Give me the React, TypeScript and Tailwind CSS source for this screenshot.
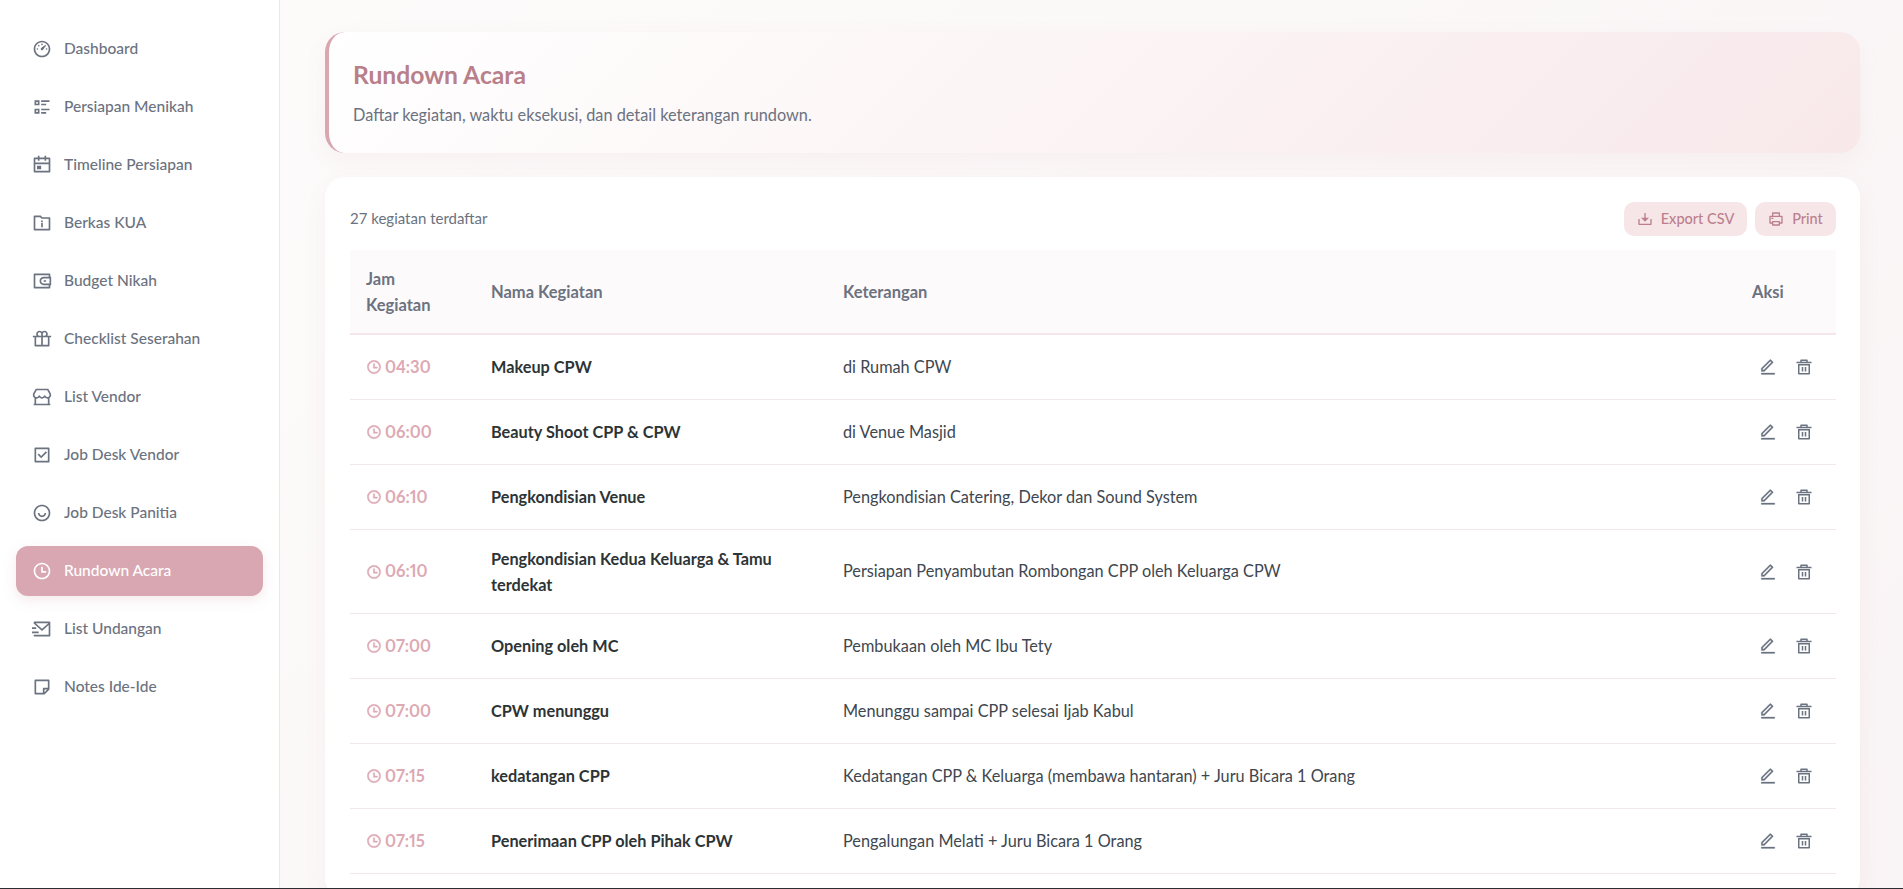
import React from "react";
import {
  RiDashboard3Line, RiListCheck2, RiCalendarEventLine, RiFolderInfoLine, RiWallet3Line, RiGiftLine,
  RiStore2Line, RiCheckboxLine, RiUserSmileLine, RiTimeLine, RiMailSendLine, RiStickyNoteLine,
  RiEditLine, RiDeleteBin5Line, RiDownload2Line, RiPrinterLine,
} from "react-icons/ri";

const nav = [
  ["Dashboard", RiDashboard3Line],
  ["Persiapan Menikah", RiListCheck2],
  ["Timeline Persiapan", RiCalendarEventLine],
  ["Berkas KUA", RiFolderInfoLine],
  ["Budget Nikah", RiWallet3Line],
  ["Checklist Seserahan", RiGiftLine],
  ["List Vendor", RiStore2Line],
  ["Job Desk Vendor", RiCheckboxLine],
  ["Job Desk Panitia", RiUserSmileLine],
  ["Rundown Acara", RiTimeLine],
  ["List Undangan", RiMailSendLine],
  ["Notes Ide-Ide", RiStickyNoteLine],
] as const;

const rows: [string, string[], string][] = [
  ["04:30", ["Makeup CPW"], "di Rumah CPW"],
  ["06:00", ["Beauty Shoot CPP & CPW"], "di Venue Masjid"],
  ["06:10", ["Pengkondisian Venue"], "Pengkondisian Catering, Dekor dan Sound System"],
  ["06:10", ["Pengkondisian Kedua Keluarga & Tamu", "terdekat"], "Persiapan Penyambutan Rombongan CPP oleh Keluarga CPW"],
  ["07:00", ["Opening oleh MC"], "Pembukaan oleh MC Ibu Tety"],
  ["07:00", ["CPW menunggu"], "Menunggu sampai CPP selesai Ijab Kabul"],
  ["07:15", ["kedatangan CPP"], "Kedatangan CPP & Keluarga (membawa hantaran) + Juru Bicara 1 Orang"],
  ["07:15", ["Penerimaan CPP oleh Pihak CPW"], "Pengalungan Melati + Juru Bicara 1 Orang"],
];

export default function App() {
  return (
    <div className="h-[889px] overflow-hidden flex flex-col font-['Lato','Inter',sans-serif] bg-[linear-gradient(135deg,#fdfbfb,#f9f4f5)]">
      <div className="flex flex-1 min-h-0">
        <aside className="w-[280px] shrink-0 bg-white border-r border-[#f0e4e7] px-4 pt-6">
          <nav className="flex flex-col gap-2">
            {nav.map(([label, Icon]) => {
              const active = label === "Rundown Acara";
              return (
                <div
                  key={label}
                  className={`h-[50px] flex items-center gap-3 rounded-xl px-4 text-[15.5px] font-medium ${active ? "bg-[#d8a7b1] text-white shadow-[0_4px_12px_rgba(216,167,177,0.25)]" : "text-[#6b7280]"}`}
                >
                  <Icon className="w-5 h-5 shrink-0" />
                  <span>{label}</span>
                </div>
              );
            })}
          </nav>
        </aside>
        <main className="flex-1 min-w-0 pl-[45px] pr-[43px] pt-8">
          <header className="h-[121px] rounded-[20px] border-l-[4px] border-[#d8a7b1] bg-[linear-gradient(135deg,#ffffff,#f8e8ea)] shadow-[0_8px_24px_rgba(183,110,121,0.06)] pl-6 flex flex-col justify-center">
            <h1 className="text-[24.7px] font-bold text-[#b97f8a] leading-8">Rundown Acara</h1>
            <p className="text-[16.3px] text-[#6b7280] mt-3 leading-6">Daftar kegiatan, waktu eksekusi, dan detail keterangan rundown.</p>
          </header>
          <section className="mt-6 bg-white rounded-[20px] pl-[25px] pr-6 pt-[25px] pb-6 shadow-[0_8px_24px_rgba(183,110,121,0.06)]">
            <div className="flex items-center justify-between h-[34px] mb-[14px]">
              <span className="text-[15px] text-[#6b7280] pb-[2px]">27 kegiatan terdaftar</span>
              <div className="flex gap-2">
                <button className="h-[34px] w-[123px] justify-center rounded-[10px] bg-[#f7e6e8] text-[#bb808c] text-[14.5px] font-medium flex items-center gap-2"><RiDownload2Line className="w-4 h-4" />Export CSV</button>
                <button className="h-[34px] w-[81px] justify-center rounded-[10px] bg-[#f7e6e8] text-[#bb808c] text-[14.5px] font-medium flex items-center gap-2"><RiPrinterLine className="w-4 h-4" />Print</button>
              </div>
            </div>
            <div className="h-[85px] flex items-center bg-[#fdfafb] border-b-2 border-[#f5e6e9] text-[16.5px] font-bold text-[#6b7280] leading-[26px]">
              <div className="w-[125px] px-4"><div>Jam</div><div>Kegiatan</div></div>
              <div className="w-[352px] pl-4">Nama Kegiatan</div>
              <div className="flex-1 pl-4">Keterangan</div>
              <div className="w-[84px]">Aksi</div>
            </div>
            {rows.map(([time, names, desc], i) => (
              <div key={i} className={`flex items-center border-b border-[#f1e8ea] ${names.length > 1 ? "h-[84px]" : "h-[65px]"}`}>
                <div className="w-[125px] pl-4 flex items-center gap-[3px] text-[#dda9b3] font-bold text-[16.5px] proportional-nums"><RiTimeLine className="w-4 h-4" stroke="currentColor" strokeWidth={0.6} />{time}</div>
                <div className="w-[352px] pl-4 font-bold text-[16.3px] text-[#2d3436] leading-[26px]">{names.map((n) => <div key={n}>{n}</div>)}</div>
                <div className="flex-1 pl-4 text-[16.3px] text-[#40474f]">{desc}</div>
                <div className="w-[84px] flex items-center gap-[18px] pl-[7px] text-[#6b7280]">
                  <RiEditLine className="w-[18px] h-[18px]" stroke="currentColor" strokeWidth={0.3} />
                  <RiDeleteBin5Line className="w-[18px] h-[18px]" />
                </div>
              </div>
            ))}
          </section>
        </main>
      </div>
      <div className="h-px shrink-0 bg-[#2b2d33]" />
    </div>
  );
}
